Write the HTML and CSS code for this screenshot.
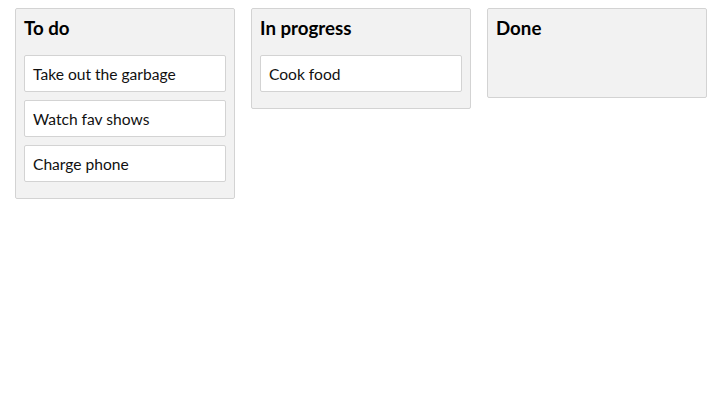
FILE: index.html
```html
<!DOCTYPE html>
<html>
<head>
<meta charset="utf-8">
<link rel="stylesheet" href="styles.css">
</head>
<body>
<div class="board">
  <section class="column">
    <h2 class="column-title">To do</h2>
    <div class="list">
      <div class="card">Take out the garbage</div>
      <div class="card">Watch fav shows</div>
      <div class="card">Charge phone</div>
    </div>
  </section>
  <section class="column">
    <h2 class="column-title">In progress</h2>
    <div class="list">
      <div class="card">Cook food</div>
    </div>
  </section>
  <section class="column">
    <h2 class="column-title">Done</h2>
    <div class="list"></div>
  </section>
</div>
</body>
</html>
```
FILE: styles.css
```css
body {
  margin: 8px;
  font-family: Lato, "Open Sans", sans-serif;
  color: #111;
  background: #fff;
}
.board {
  display: flex;
  justify-content: center;
  align-items: flex-start;
  gap: 16px;
}
.column {
  width: 220px;
  box-sizing: border-box;
  background: #f2f2f2;
  border: 1px solid #d3d3d3;
  border-radius: 2px;
  padding: 7px 8px 8px;
}
.column-title {
  margin: 0 0 15px;
  font-size: 18.72px;
  line-height: 24px;
  font-weight: 700;
  color: #000;
}
.list {
  min-height: 34px;
}
.card {
  background: #fff;
  border: 1px solid #d3d3d3;
  border-radius: 2px;
  padding: 9px 8px 7px;
  font-size: 15.6px;
  line-height: 19px;
  margin-bottom: 8px;
}
```
